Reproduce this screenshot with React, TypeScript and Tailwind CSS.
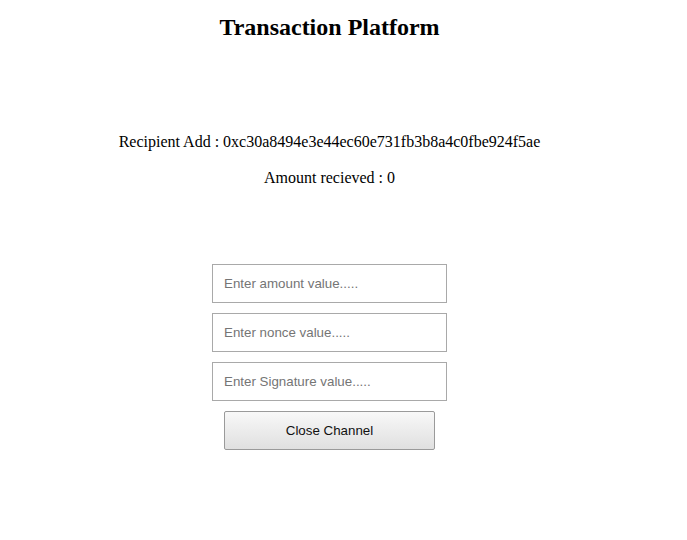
export default function App() {
  const fields = ['Enter amount value.....', 'Enter nonce value.....', 'Enter Signature value.....'];

  return (
    <div className="w-[659px] bg-white text-black">
      <h2 className="pt-[14px] text-center text-[24px] font-bold leading-[27px] font-['Liberation_Serif',serif]">
        Transaction Platform
      </h2>

      <div className="mt-[92px] text-center text-[16px] leading-[18px] font-['Liberation_Serif',serif]">
        <p>Recipient Add : 0xc30a8494e3e44ec60e731fb3b8a4c0fbe924f5ae</p>
        <p className="mt-[18px]">Amount recieved : 0</p>
      </div>

      <div className="mt-[77px] flex flex-col items-center gap-[10px] font-['Liberation_Sans',Arial,sans-serif] text-[13.33px]">
        {fields.map((placeholder, i) => (
          <input
            key={i}
            type="text"
            placeholder={placeholder}
            className="w-[235px] h-[39px] border border-[#a9a9a9] bg-white px-[11px] placeholder:text-[#757575] outline-none"
          />
        ))}
        <button className="w-[211px] h-[39px] border border-[#9a9a9a] rounded-[2px] bg-gradient-to-b from-[#f8f8f8] to-[#e0e0e0] text-[#111]">
          Close Channel
        </button>
      </div>
    </div>
  );
}
